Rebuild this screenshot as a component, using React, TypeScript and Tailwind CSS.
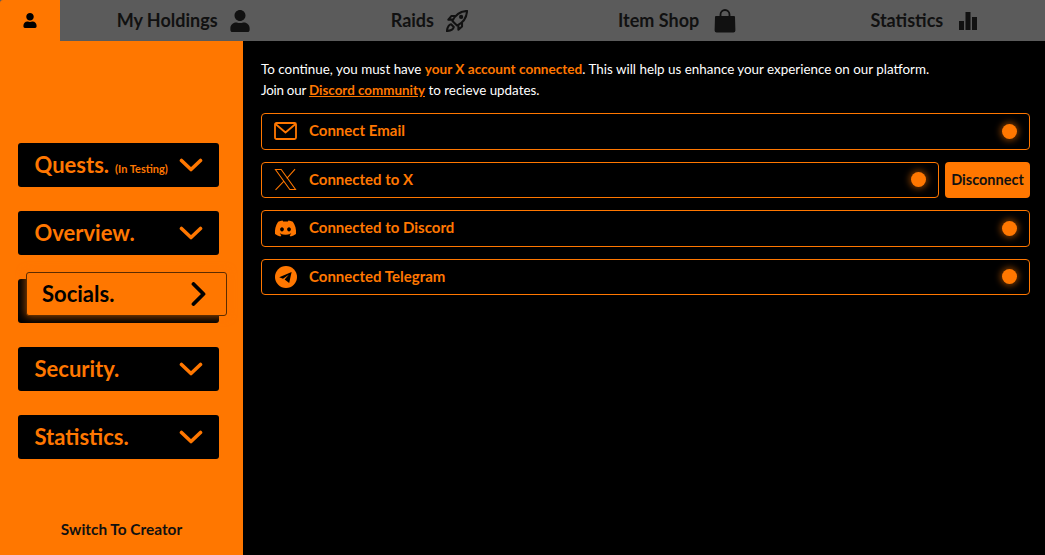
import React from "react";
import { FaUser, FaDiscord } from "react-icons/fa";

const font = "font-['Lato','Noto_Sans',sans-serif]";

function Chevron({ className = "" }: { className?: string }) {
  return (
    <svg viewBox="0 0 24 14" className={className} fill="none" stroke="currentColor" strokeWidth="3.6" strokeLinecap="round" strokeLinejoin="round">
      <path d="M2.5 2.5 12 11.5 21.5 2.5" />
    </svg>
  );
}

function ChevronRight() {
  return (
    <svg viewBox="0 0 14 24" className="w-[15px] h-[24px] text-black" fill="none" stroke="currentColor" strokeWidth="3.8" strokeLinecap="round" strokeLinejoin="round">
      <path d="M2 2 12 12 2 22" />
    </svg>
  );
}

function RocketIcon() {
  return (
    <svg viewBox="0 0 24 24" className="w-[22px] h-[22px] text-[#111]" fill="none" stroke="currentColor" strokeWidth="2.2" strokeLinejoin="round">
      <path d="M23 1C15 1.5 10 5 7 12l5 5c7-3 10.5-8 11-16z" />
      <path d="M7.5 10.5H2.5L6 6.5h4" />
      <path d="M13.5 16.5v5l4-3.5v-4" />
      <circle cx="16.5" cy="7.5" r="1.2" fill="currentColor" />
      <path d="M5.5 15.5C3 16 1.5 19 1 23c4-.5 7-2 7.5-4.5z" />
    </svg>
  );
}

function BagIcon() {
  return (
    <svg viewBox="0 0 22 24" className="w-[22px] h-[24px] text-[#111]" fill="currentColor">
      <path d="M2 7h18a1 1 0 0 1 1 1l.4 13.5a2 2 0 0 1-2 2H2.6a2 2 0 0 1-2-2L1 8a1 1 0 0 1 1-1z" />
      <path d="M6.5 8V5.5a4.5 4.5 0 0 1 9 0V8" fill="none" stroke="currentColor" strokeWidth="1.8" />
    </svg>
  );
}

function BarsIcon() {
  return (
    <svg viewBox="0 0 18 18" className="w-[18px] h-[18px] text-[#111]" fill="currentColor">
      <rect x="0" y="9" width="5" height="9" />
      <rect x="6.5" y="0" width="5" height="18" />
      <rect x="13" y="5" width="5" height="13" />
    </svg>
  );
}

function TelegramIcon() {
  return (
    <svg viewBox="0 0 22 22" className="w-[22px] h-[22px]">
      <circle cx="11" cy="11" r="11" fill="currentColor" />
      <path d="M16.6 6 4.2 11.3 8 12.7l5.8-3.9-4.2 4.7 4.6 3.4z" fill="#000" />
    </svg>
  );
}

function MenuButton({ label, small }: { label: string; small?: string }) {
  return (
    <div className="h-[44px] w-[201px] bg-black rounded-[3px] flex items-center pl-[16.5px] pr-[16px] text-[#ff7700]">
      <span className="text-[22px] font-bold leading-none whitespace-nowrap">{label}</span>
      {small && <span className="text-[11px] font-bold ml-[6px] mt-[9px] whitespace-nowrap">{small}</span>}
      <Chevron className="w-[24px] h-[14px] ml-auto" />
    </div>
  );
}

function Row({ icon, label, className = "" }: { icon: React.ReactNode; label: string; className?: string }) {
  return (
    <div className={`h-[36.5px] flex-1 border border-[#ff7700] rounded-[4px] flex items-center pl-[12px] pr-[12px] text-[#ff7700] ${className}`}>
      <span className="w-[23px] h-[23px] flex items-center justify-center shrink-0">{icon}</span>
      <span className="ml-[12px] pb-[2px] text-[15px] font-bold whitespace-nowrap">{label}</span>
      <span className="ml-auto w-[15px] h-[15px] rounded-full bg-[#ff7700] shadow-[0_0_6px_2px_rgba(255,119,0,0.45)]" />
    </div>
  );
}

function Tab({ label, icon, className }: { label: string; icon: React.ReactNode; className: string }) {
  return (
    <div className={`w-[246.25px] shrink-0 flex items-center justify-center ${className}`}>
      <span className="text-[18px] font-bold text-[#111] whitespace-nowrap">{label}</span>
      {icon}
    </div>
  );
}

export default function App() {
  return (
    <div className={`${font} w-[1045px] h-[555px] bg-black flex flex-col overflow-hidden`}>
      <div className="h-[41px] flex bg-[#5b5b5b] shrink-0">
        <div className="w-[60px] bg-[#ff7700] rounded-tl-[3px] flex items-center justify-center">
          <FaUser className="w-[14px] h-[15px] text-black" />
        </div>
        <Tab className="gap-[12px]" label="My Holdings" icon={<FaUser className="w-[20px] h-[22px] text-[#111]" />} />
        <Tab className="gap-[12px]" label="Raids" icon={<RocketIcon />} />
        <Tab className="gap-[15px] pl-[3px]" label="Item Shop" icon={<BagIcon />} />
        <Tab className="gap-[16px] pl-[4px]" label="Statistics" icon={<BarsIcon />} />
      </div>
      <div className="flex-1 flex min-h-0">
        <aside className="w-[243px] bg-[#ff7700] pl-[18px] pt-[102px] flex flex-col">
          <div className="flex flex-col gap-[24px]">
            <MenuButton label="Quests." small="(In Testing)" />
            <MenuButton label="Overview." />
            <div className="h-[44px] w-[201px] bg-black rounded-[3px] relative">
              <div className="absolute left-[8px] top-[-7px] h-[44px] w-[201px] bg-[#ff7700] border border-[#5c2c00] rounded-[3px] flex items-center pl-[15px] pr-[20px] shadow-[0_0_8px_1px_rgba(255,119,0,0.55)]">
                <span className="text-[22px] font-bold leading-none text-black">Socials.</span>
                <span className="ml-auto"><ChevronRight /></span>
              </div>
            </div>
            <MenuButton label="Security." />
            <MenuButton label="Statistics." />
          </div>
          <div className="mt-auto mb-[14px] -ml-[18px] text-center text-[15.4px] font-bold text-[#111]">Switch To Creator</div>
        </aside>
        <main className="flex-1 pl-[18px] pr-[15px] pt-[18px]">
          <p className="text-white text-[13.4px] leading-[21px] whitespace-nowrap">
            To continue, you must have <b className="text-[#ff7700] text-[13.6px]">your X account connected</b>. This will help us enhance your experience on our platform.
            <br />
            <span className="tracking-[-0.25px]">Join our </span><b className="text-[#ff7700] underline text-[13.4px]">Discord community</b> to recieve updates.
          </p>
          <div className="mt-[12px] flex flex-col gap-[12px]">
            <div className="flex">
              <Row label="Connect Email" icon={
                <svg viewBox="0 0 23 18" className="w-[23px] h-[18px]" fill="none" stroke="currentColor" strokeWidth="1.8" strokeLinejoin="round">
                  <rect x="1" y="1" width="21" height="16" rx="1.5" />
                  <path d="M1.5 2 11.5 10.5 21.5 2" />
                </svg>
              } />
            </div>
            <div className="flex gap-[6px]">
              <Row label="Connected to X" icon={
                <svg viewBox="0 0 24 24" className="w-[23px] h-[23px]" fill="none" stroke="currentColor" strokeWidth="1.1">
                  <path d="M1.5 1.5h6l15 21h-6z" />
                  <path d="M22 1.2 13.4 10.8M10.4 13.8 1.6 22.8" />
                </svg>
              } />
              <button className="w-[85px] h-[36.5px] bg-[#ff7700] rounded-[4px] text-[14.5px] font-bold text-[#111] whitespace-nowrap">Disconnect</button>
            </div>
            <div className="flex">
              <Row label="Connected to Discord" icon={<FaDiscord className="w-[23px] h-[23px]" />} />
            </div>
            <div className="flex">
              <Row label="Connected Telegram" icon={<TelegramIcon />} />
            </div>
          </div>
        </main>
      </div>
    </div>
  );
}
